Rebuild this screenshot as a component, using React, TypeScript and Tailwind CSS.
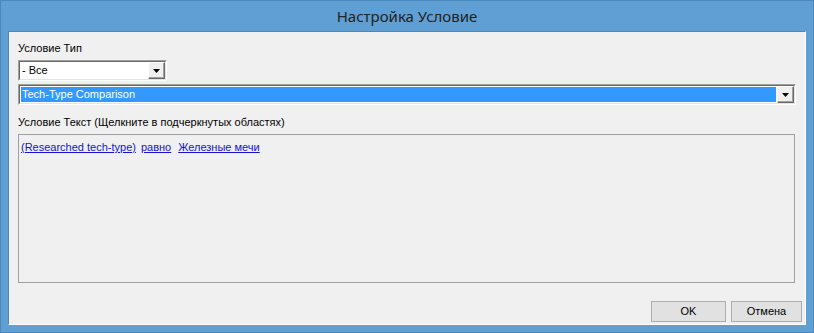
import React from 'react';

const ui = { fontFamily: '"Liberation Sans", Arial, sans-serif' };

const DropButton: React.FC = () => (
  <div className="flex h-full w-[17px] shrink-0 items-center justify-center border border-t-white border-l-white border-r-[#696969] border-b-[#696969] bg-[#f0f0f0] shadow-[inset_-1px_-1px_0_#a0a0a0]">
    <svg width="7" height="4" viewBox="0 0 7 4">
      <path d="M0 0h7L3.5 4z" fill="#000" />
    </svg>
  </div>
);

const Combo: React.FC<{ width: string; selected?: boolean; text: string }> = ({ width, selected, text }) => (
  <div className={`flex h-[21px] ${width} border border-t-[#a0a0a0] border-l-[#a0a0a0] border-r-white border-b-white`}>
    <div className="flex flex-1 border border-t-[#696969] border-l-[#696969] border-r-[#e3e3e3] border-b-[#e3e3e3] bg-white">
      <div className="flex flex-1 p-px">
        <div
          className={`flex flex-1 items-center px-[1px] text-[11px] leading-none ${
            selected ? 'bg-[#3399ff] text-white' : 'text-black'
          }`}
        >
          {text}
        </div>
      </div>
      <DropButton />
    </div>
  </div>
);

const WinButton: React.FC<{ label: string; width: string }> = ({ label, width }) => (
  <button
    className={`flex h-[21px] ${width} items-center justify-center border border-[#adadad] bg-[#e1e1e1] text-[11px] text-black`}
  >
    {label}
  </button>
);

export default function App() {
  return (
    <div
      className="flex h-[333px] w-[814px] flex-col border border-[#4d88bd] bg-[#5f9fd3]"
      style={ui}
    >
      <div
        className="flex h-[30px] shrink-0 items-center justify-center pt-[1px] text-[15px] text-[#222]"
        style={{ fontFamily: '"Noto Sans", "Open Sans", sans-serif' }}
      >
        Настройка Условие
      </div>
      <div className="mx-[7px] mb-[7px] flex flex-1 flex-col border border-t-[#4d88bd] border-l-[#4d88bd] border-r-white border-b-white bg-[#f0f0f0] px-[9px]">
        <div className="mt-[10px] h-[13px] text-[11px] leading-[13px] text-black">Условие Тип</div>
        <div className="mt-[5px]">
          <Combo width="w-[149px]" text="- Все" />
        </div>
        <div className="mt-[3px]">
          <Combo width="w-[778px]" selected text="Tech-Type Comparison" />
        </div>
        <div className="mt-[11px] h-[13px] text-[11px] leading-[13px] text-black">
          Условие Текст (Щелкните в подчеркнутых областях)
        </div>
        <div className="mt-[5px] h-[149px] w-[777px] border border-[#a0a0a0] bg-[#f0f0f0] px-[2px] pt-[6px] text-[11px] leading-[13px]">
          <span className="text-[#1515d0] underline">(Researched tech-type)</span>
          <span className="ml-[5px] text-[#1515d0] underline">равно</span>
          <span className="ml-[7px] text-[#1515d0] underline">Железные мечи</span>
        </div>
        <div className="-mr-[6px] mt-[18px] flex justify-end gap-[5px]">
          <WinButton label="OK" width="w-[75px]" />
          <WinButton label="Отмена" width="w-[71px]" />
        </div>
      </div>
    </div>
  );
}
